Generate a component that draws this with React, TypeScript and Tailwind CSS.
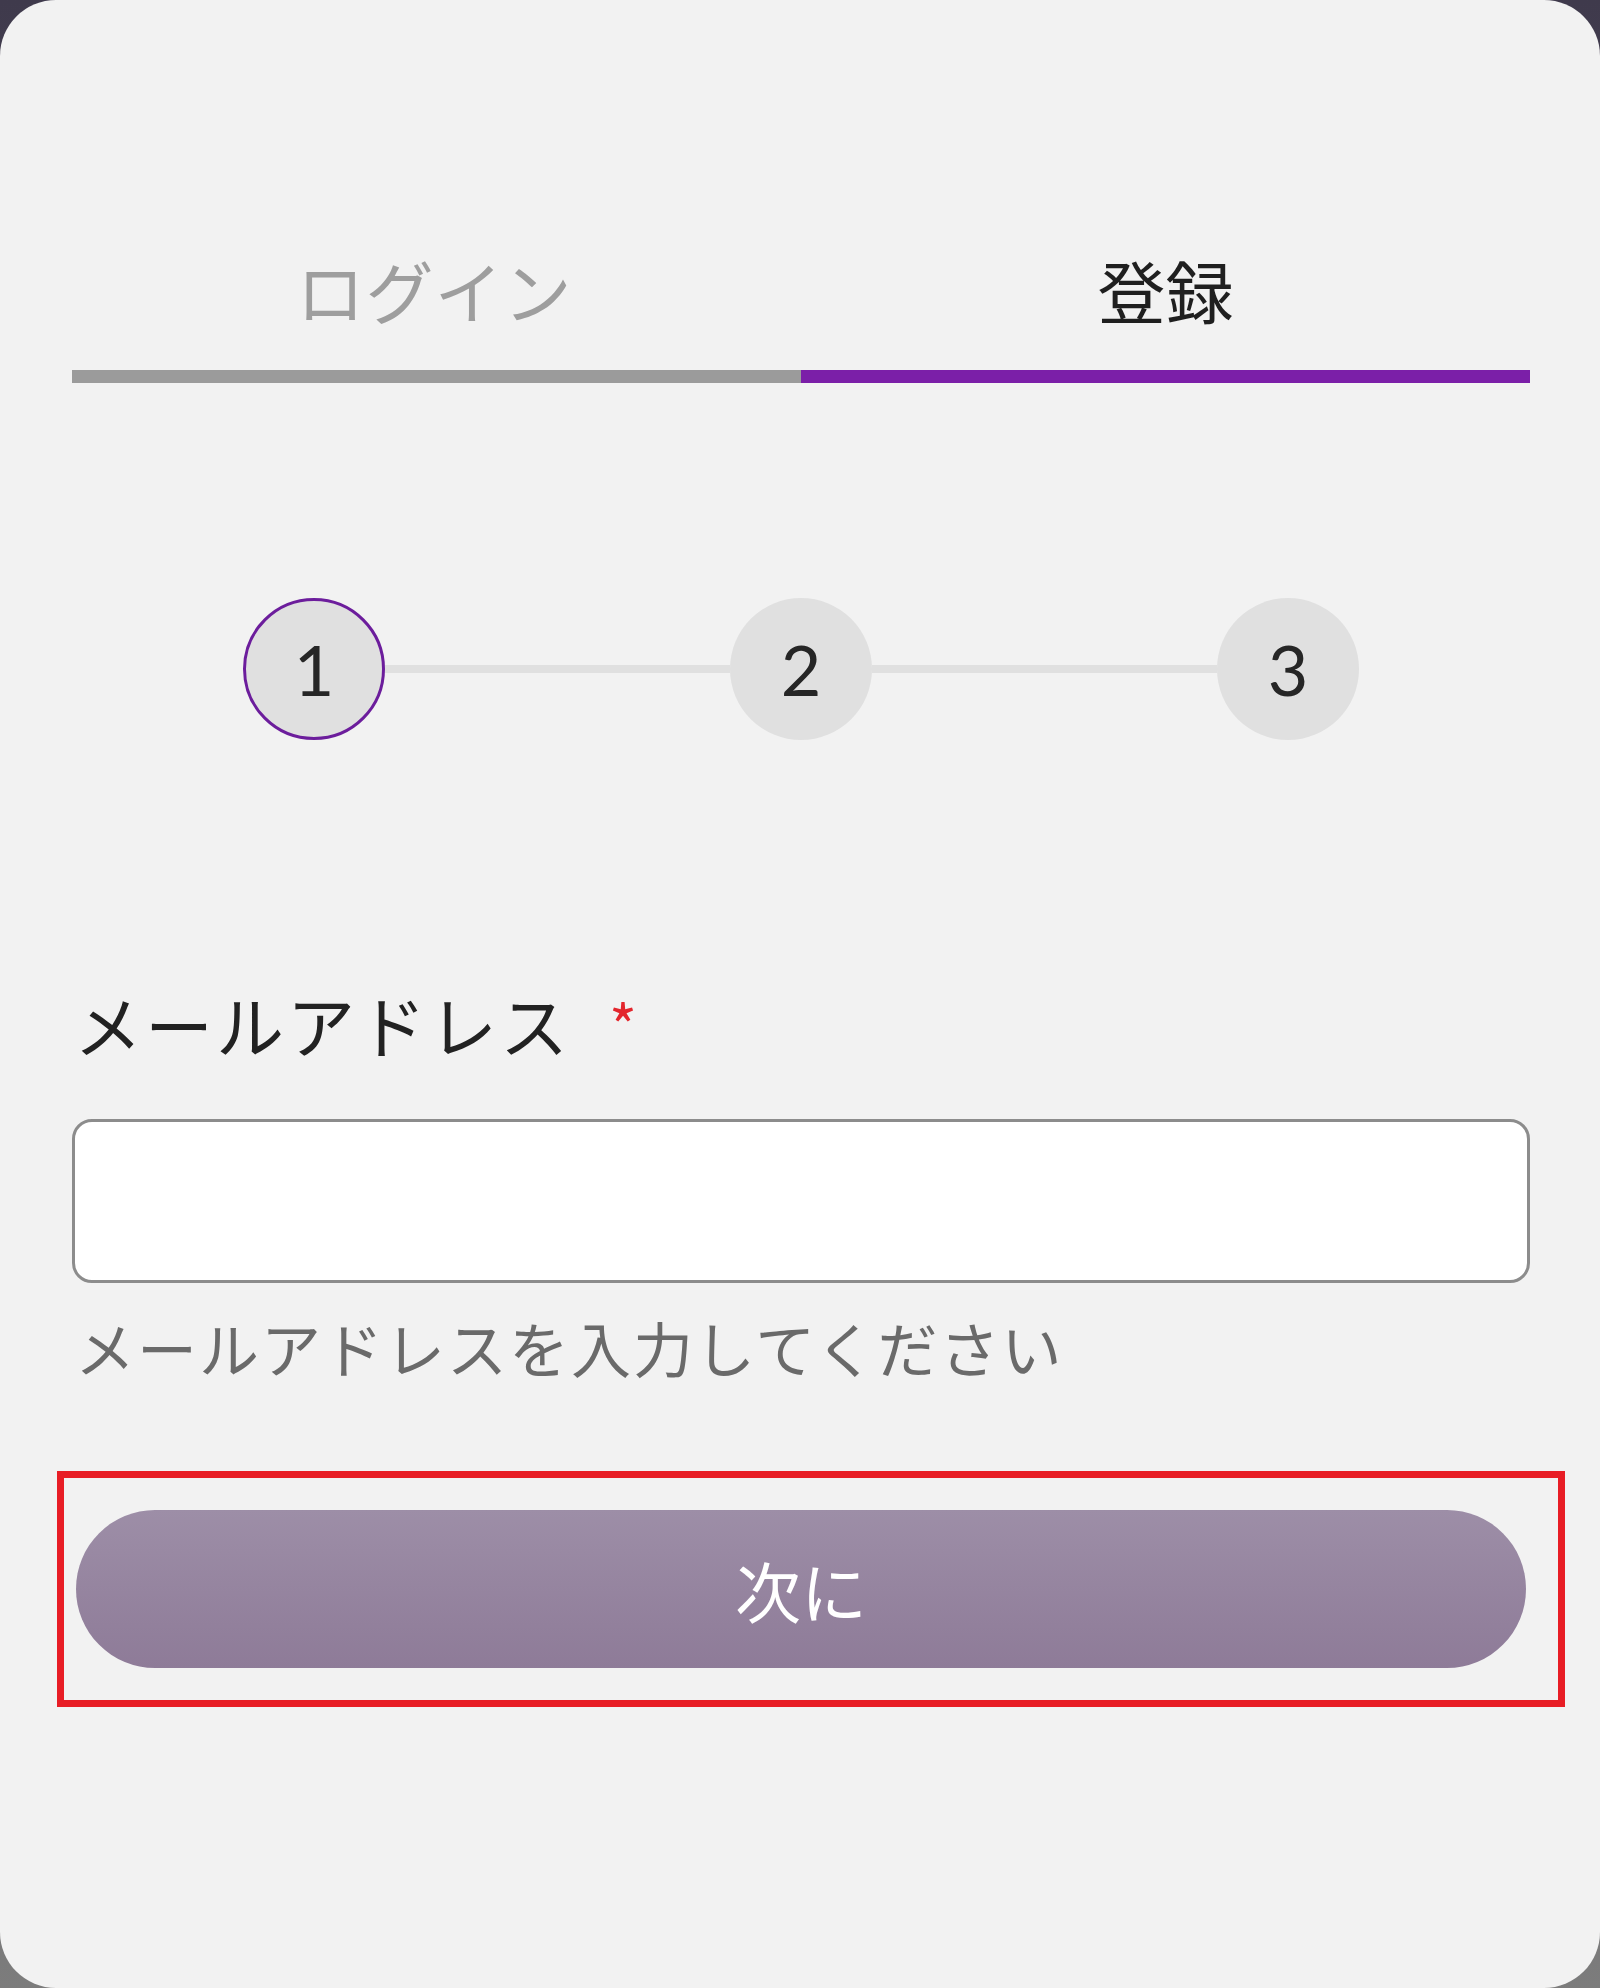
import React from 'react';

const jp = "font-['Noto_Sans_CJK_JP','Noto_Sans',sans-serif]";

const steps = [1, 2, 3];

const StepCircle: React.FC<{ n: number; active?: boolean }> = ({ n, active = false }) => (
  <div
    className={`w-[142px] h-[142px] shrink-0 rounded-full bg-[#e0e0e0] flex items-center justify-center text-[70px] leading-none text-[#262626] font-['Lato',sans-serif] ${
      active ? 'border-[3px] border-[#6c1d9c]' : ''
    }`}
  >
    {n}
  </div>
);

export default function App() {
  return (
    <div className="w-[1600px] h-[1988px] bg-gradient-to-b from-[#3f3a4c] via-[#5a5560] to-[#7c7c7c]">
      <div className={`w-full h-full rounded-[56px] bg-[#f2f2f2] ${jp}`}>
        <div className="pl-[72px] pr-[70px] pt-[250px]">
          {/* Tabs */}
          <div className="flex">
            <div className="flex-1 flex flex-col">
              <div className="h-[80px] leading-[80px] text-center text-[68px] text-[#9e9e9e] tracking-[1px] pr-[4px]">ログイン</div>
              <div className="mt-[40px] h-[13px] bg-[#9b9b9b]" />
            </div>
            <div className="flex-1 flex flex-col">
              <div className="h-[80px] leading-[80px] text-center text-[68px] text-[#1f1f1f]">登録</div>
              <div className="mt-[40px] h-[13px] bg-[#7b1fa8]" />
            </div>
          </div>

          {/* Stepper */}
          <div className="mt-[215px] w-[1116px] mx-auto flex items-center">
            {steps.map((n, i) => (
              <React.Fragment key={n}>
                <StepCircle n={n} active={i === 0} />
                {i < steps.length - 1 && <div className="flex-1 h-[8px] bg-[#e0e0e0]" />}
              </React.Fragment>
            ))}
          </div>

          {/* Email field */}
          <div className="mt-[244px] pl-[2px] flex items-start h-[80px]">
            <span className="text-[68px] leading-[80px] text-[#222] tracking-[3px]">メールアドレス</span>
            <span className="ml-[38px] mt-[10px] text-[60px] leading-[60px] text-[#e3262d]">*</span>
          </div>
          <div className="mt-[55px] h-[164px] rounded-[20px] border-[3px] border-[#8c8c8c] bg-white" />
          <div className="mt-[29px] pl-[3px] text-[60px] leading-[70px] tracking-[2px] text-[#6a6a6a]">
            メールアドレスを入力してください
          </div>
        </div>

        {/* Next button (highlighted) */}
        <div className="mt-[89px] ml-[57px] w-[1508px] h-[236px] border-[7px] border-[#e81d25] pt-[32px] pl-[12px]">
          <button className="w-[1450px] h-[158px] rounded-full bg-gradient-to-b from-[#9d8ea7] to-[#8e7b98] text-white text-[66px] leading-none flex items-center justify-center">
            次に
          </button>
        </div>
      </div>
    </div>
  );
}
